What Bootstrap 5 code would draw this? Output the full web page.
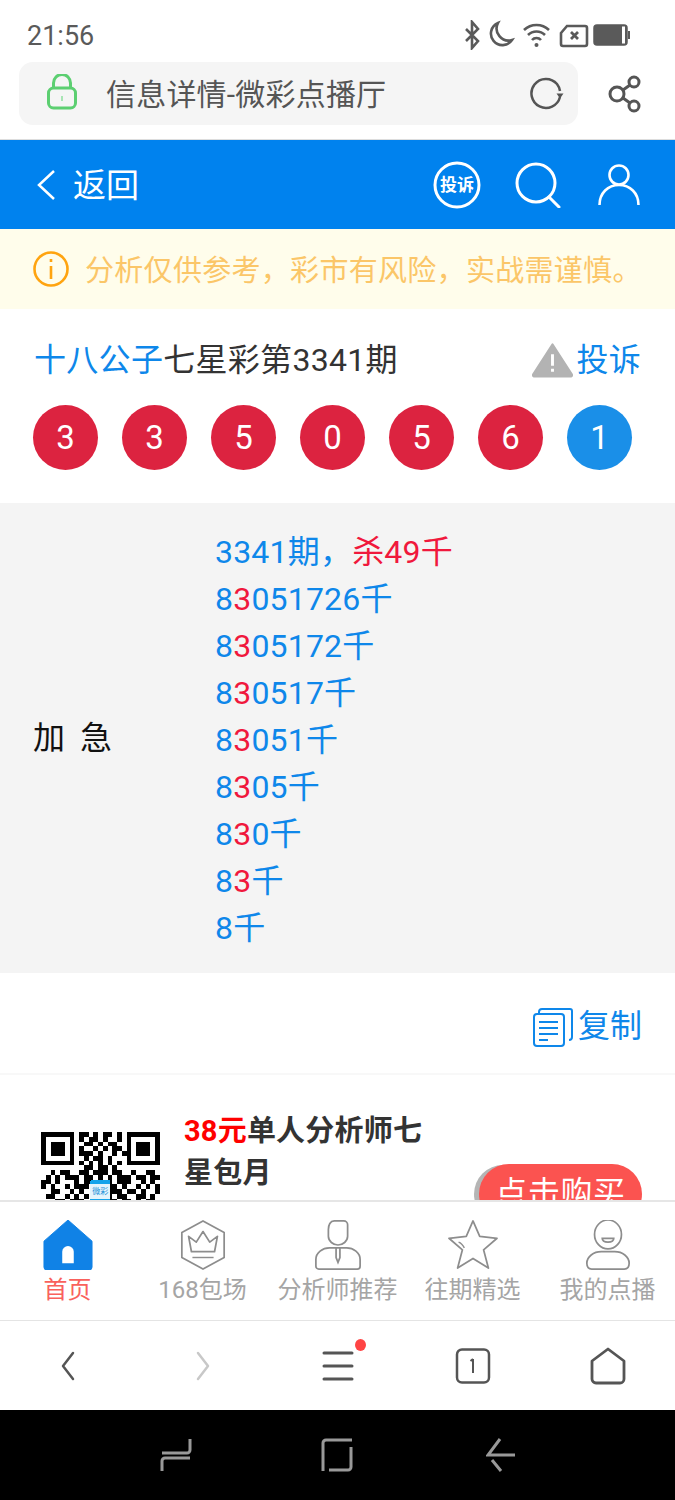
<!DOCTYPE html>
<html lang="zh-CN">
<head>
<meta charset="UTF-8">
<meta name="viewport" content="width=device-width, initial-scale=1.0">
<title>信息详情-微彩点播厅</title>
<link href="https://cdn.jsdelivr.net/npm/bootstrap@5.3.2/dist/css/bootstrap.min.css" rel="stylesheet">
<style>
body { width: 675px; height: 1500px; overflow: hidden; background: #fff; font-family: Roboto, "Noto Sans CJK SC", sans-serif; }
.phone { height: 1500px; }
.status-row { height: 62px; padding: 16px 45px 0 27px; color: #5a5a5a; font-size: 27px; line-height: 40px; }
.status-icons { margin-top: 4px; }
.url-row { height: 78px; padding: 0 33px 14px 19px; border-bottom: 1px solid #ddd; }
.url-box { width: 559px; height: 63px; background: #f5f5f5; border-radius: 14px; padding: 0 14px 0 28px; }
.url-text { font-size: 30px; letter-spacing: .2px; color: #555; margin-left: 29px; margin-top: 1px; }
.top-bar { height: 89px; background: #0082ee; color: #fff; padding: 0 35px 0 36px; }
.back-text { font-size: 33px; margin-left: 17px; margin-top: 3px; }
.notice { height: 80px; background: #fffdeb; padding-left: 33px; color: #fbc668; font-size: 29px; }
.notice span { margin-left: 16px; margin-top: 6px; letter-spacing: .3px; white-space: nowrap; }
.title-row { height: 96px; padding: 6px 34px 0 35px; font-size: 32px; color: #333; letter-spacing: .3px; }
.title-name { margin-left: -1px; }
.blue-text { color: #0e87ea; }
.balls { height: 98px; padding-left: 33px; gap: 24px; }
.ball { width: 65px; height: 65px; color: #fff; font-size: 33px; background: #dc2340; }
.ball-blue { background: #1a8fe8; }
.detail { height: 470px; background: #f4f4f4; padding: 0 0 0 33px; font-size: 32px; }
.detail-label { width: 183px; color: #111; }
.detail-label i { display: inline-block; width: 15px; }
.detail-lines { line-height: 47px; color: #0e87ea; letter-spacing: .2px; margin: 5px 0 0 -1px; }
.red-text { color: #f0183c; }
.copy-row { height: 102px; border-bottom: 2px solid #f8f8f8; padding: 8px 33px 0 0; font-size: 32px; color: #0e87ea; }
.copy-row span { margin-left: 5px; margin-top: -2px; }
.ad-row { height: 125px; overflow: hidden; padding-left: 41px; position: relative; }
.qr { margin-top: 57px; width: 119px; flex: none; }
.ad-text { width: 250px; margin: 35px 0 0 24px; font-size: 29px; line-height: 42px; font-weight: 700; color: #333; letter-spacing: .2px; }
.ad-price { color: #f00; }
.buy-btn { position: absolute; left: 479px; top: 89px; width: 163px; height: 60px; border-radius: 30px; background: #fb5350; color: #fff; font-size: 32px; letter-spacing: .6px; padding-top: 5px; box-shadow: -6px 0 0 -1px #b5b5b5; }
.tabs { height: 120px; border-top: 2px solid #e6e6e6; }
.tab-item { width: 135px; color: #a5a5a5; font-size: 24px; padding-top: 18px; white-space: nowrap; }
.tab-item svg { height: 50px; margin-bottom: 2px; }
.tab-on { color: #f9615c; }
.tool-row { height: 90px; border-top: 1px solid #e4e4e4; }
.tool-item { width: 135px; position: relative; }
.red-dot { position: absolute; left: 85px; top: -12px; width: 11px; height: 12px; background: #f44; }
.sys-row { height: 90px; background: #000; }
.sys-mid { margin: 0 133px 0 129px; }
</style>
</head>
<body>
<div class="phone d-flex flex-column">

    <!-- status bar -->
    <div class="status-row d-flex justify-content-between flex-shrink-0">
        <div>21:56</div>
        <svg class="status-icons" width="166" height="30" viewBox="0 0 166 30" fill="none" stroke="#5a5a5a" stroke-width="2.600">
            <path d="M2 9l12 12-6 7V2l6 7L2 21"/>
            <path d="M34 3a11.500 11.500 0 1 0 14 17 12 12 0 0 1-14-17z"/>
            <path d="M60 10a18 18 0 0 1 25 0M64 15a12 12 0 0 1 17 0M68 20a6 6 0 0 1 9 0"/>
            <circle cx="72.500" cy="25" r="2" fill="#5a5a5a" stroke="none"/>
            <path d="M97 13l6-7h18a2 2 0 0 1 2 2v16a2 2 0 0 1-2 2H99a2 2 0 0 1-2-2z"/>
            <path d="M107 12l7 7M114 12l-7 7" stroke-width="2.800"/>
            <rect x="130" y="5" width="33" height="20" rx="3" fill="#5a5a5a" stroke-width="1.500"/>
            <rect x="158" y="6.500" width="3" height="17" fill="#fff" stroke="none"/>
            <rect x="164" y="11" width="2" height="8" fill="#5a5a5a" stroke="none"/>
        </svg>
    </div>

    <!-- browser address bar -->
    <div class="url-row d-flex justify-content-between flex-shrink-0">
        <div class="url-box d-flex align-items-center">
            <svg width="30" height="36" viewBox="0 0 30 36" fill="none" stroke="#5ccf71" stroke-width="3" class="mb-1">
                <rect x="1.500" y="14" width="27" height="20" rx="5"/>
                <path d="M6.500 14V9a8.500 8.500 0 0 1 17 0v5"/>
                <path d="M15 22v5" stroke-width="2" stroke="#a9e5b5"/>
            </svg>
            <div class="url-text flex-grow-1">信息详情-微彩点播厅</div>
            <svg width="34" height="34" viewBox="0 0 34 34" fill="none" stroke="#555" stroke-width="2.500">
                <path d="M30 20A14.500 14.500 0 1 1 27 7a15 15 0 0 1 3 7"/>
                <path d="M26.500 16.500h7l-3.500 5z" fill="#555" stroke="none"/>
            </svg>
        </div>
        <svg class="align-self-center" width="34" height="38" viewBox="0 0 34 38" fill="none" stroke="#555" stroke-width="3">
            <circle cx="9" cy="19" r="7"/>
            <circle cx="26" cy="7" r="5"/>
            <circle cx="26" cy="31" r="5"/>
            <path d="M15 15l7-5M15 23l7 5"/>
        </svg>
    </div>

    <!-- blue header -->
    <div class="top-bar d-flex align-items-center flex-shrink-0">
        <svg width="20" height="32" viewBox="0 0 20 32" fill="none" stroke="#fff" stroke-width="2.500"><path d="M18 2L3 16l15 14"/></svg>
        <div class="back-text flex-grow-1">返回</div>
        <svg width="48" height="48" viewBox="0 0 48 48" style="margin-right:34px">
            <circle cx="24" cy="24" r="22" fill="none" stroke="#fff" stroke-width="3"/>
            <text x="24" y="30" text-anchor="middle" fill="#fff" font-size="17" font-weight="700" font-family="'Noto Sans CJK SC', sans-serif">投诉</text>
        </svg>
        <svg width="46" height="46" viewBox="0 0 46 46" fill="none" stroke="#fff" stroke-width="3" style="margin-right:37px">
            <circle cx="21" cy="21" r="19"/>
            <path d="M34 35l10 10" stroke-linecap="round"/>
        </svg>
        <svg width="42" height="42" viewBox="0 0 42 42" fill="none" stroke="#fff" stroke-width="2.600">
            <circle cx="21" cy="11" r="9.500"/>
            <path d="M1.500 41C1.500 29 10 21 21 21s19.500 8 19.500 20"/>
        </svg>
    </div>

    <!-- notice -->
    <div class="notice d-flex align-items-center flex-shrink-0">
        <svg width="36" height="36" viewBox="0 0 36 36" fill="none" stroke="#ffa410" stroke-width="2.600" class="flex-shrink-0">
            <circle cx="18" cy="18" r="16.500"/>
            <path d="M18 15v13M18 8v3"/>
        </svg>
        <span>分析仅供参考，彩市有风险，实战需谨慎。</span>
    </div>

    <!-- title -->
    <div class="title-row d-flex justify-content-between align-items-center flex-shrink-0">
        <div class="title-name"><span class="blue-text">十八公子</span>七星彩第3341期</div>
        <div class="d-flex align-items-center blue-text">
            <svg width="41" height="36" viewBox="0 0 42 36" style="margin-right:3px">
                <path d="M21 2L41 33a1.500 1.500 0 0 1-1 2H2a1.500 1.500 0 0 1-1-2z" fill="#b3b3b3" stroke="#b3b3b3" stroke-linejoin="round" stroke-width="2"/>
                <path d="M21 12v12M21 27v3" stroke="#fff" stroke-width="3"/>
            </svg>
            投诉
        </div>
    </div>

    <!-- numbers -->
    <div class="balls d-flex flex-shrink-0">
        <div class="ball rounded-circle d-flex align-items-center justify-content-center">3</div>
        <div class="ball rounded-circle d-flex align-items-center justify-content-center">3</div>
        <div class="ball rounded-circle d-flex align-items-center justify-content-center">5</div>
        <div class="ball rounded-circle d-flex align-items-center justify-content-center">0</div>
        <div class="ball rounded-circle d-flex align-items-center justify-content-center">5</div>
        <div class="ball rounded-circle d-flex align-items-center justify-content-center">6</div>
        <div class="ball ball-blue rounded-circle d-flex align-items-center justify-content-center">1</div>
    </div>

    <!-- detail -->
    <div class="detail d-flex align-items-center flex-shrink-0">
        <div class="detail-label">加<i></i>急</div>
        <div class="detail-lines">
            <div>3341期，<span class="red-text">杀49千</span></div>
            <div>8<span class="red-text">3</span>051726千</div>
            <div>8<span class="red-text">3</span>05172千</div>
            <div>8<span class="red-text">3</span>0517千</div>
            <div>8<span class="red-text">3</span>051千</div>
            <div>8<span class="red-text">3</span>05千</div>
            <div>8<span class="red-text">3</span>0千</div>
            <div>8<span class="red-text">3</span>千</div>
            <div>8千</div>
        </div>
    </div>

    <!-- copy -->
    <div class="copy-row d-flex justify-content-end align-items-center flex-shrink-0">
        <svg width="40" height="40" viewBox="0 0 40 40" fill="none" stroke="#0e87ea" stroke-width="2">
            <path d="M6 7V5a3 3 0 0 1 3-3h28a2 2 0 0 1 2 2v26a3 3 0 0 1-3 3"/>
            <rect x="1" y="7" width="30" height="32" rx="3"/>
            <path d="M6 15h19M6 21h19M6 27h19M6 33h9" stroke-width="2.200"/>
        </svg>
        <span>复制</span>
    </div>

    <!-- package ad, cut off by the tab bar -->
    <div class="ad-row d-flex flex-shrink-0">
        <div class="qr">
            <svg id="qrCode" width="119" height="119" viewBox="0 0 25 25" shape-rendering="crispEdges"></svg>
        </div>
        <div class="ad-text"><span class="ad-price">38元</span>单人分析师七星包月</div>
        <div class="buy-btn text-center">点击购买</div>
    </div>

    <!-- tab bar -->
    <div class="tabs d-flex flex-shrink-0 bg-white position-relative">
        <div class="tab-item tab-on d-flex flex-column align-items-center">
            <svg width="52" height="52" viewBox="0 0 52 52">
                <path d="M26 0L51 22v27a3 3 0 0 1-3 3H4a3 3 0 0 1-3-3V22z" fill="#1082e6" stroke="#1082e6" stroke-linejoin="round"/>
                <path d="M20 45V33a6 6 0 0 1 12 0v12z" fill="#fff"/>
            </svg>
            首页
        </div>
        <div class="tab-item d-flex flex-column align-items-center">
            <svg width="48" height="52" viewBox="0 0 48 52" fill="none" stroke="#8d8d8d" stroke-width="1.800">
                <path d="M24 1L46 13v26L24 51 2 39V13z" stroke-linejoin="round"/>
                <path d="M12 33l-3-16 8 6 7-11 7 11 8-6-3 16z" stroke-linejoin="round"/>
                <path d="M13 39h22" stroke-width="1.500"/>
            </svg>
            168包场
        </div>
        <div class="tab-item d-flex flex-column align-items-center">
            <svg width="48" height="52" viewBox="0 0 48 52" fill="none" stroke="#8d8d8d" stroke-width="1.800">
                <path d="M20 1h10a4 4 0 0 1 4 4v12c0 5-5 9-10 9s-10-4-10-9V10c0-5 2-9 6-9z"/>
                <path d="M15 29h18c7 0 14 5 14 12v7a3 3 0 0 1-3 3H4a3 3 0 0 1-3-3v-7c0-7 7-12 14-12z"/>
                <path d="M22 29v10l2 5 2-5V29"/>
            </svg>
            分析师推荐
        </div>
        <div class="tab-item d-flex flex-column align-items-center">
            <svg width="52" height="52" viewBox="0 0 52 52" fill="none" stroke="#8d8d8d" stroke-width="1.800">
                <path d="M26 1l7 16 18 2-14 12 5 19-16-10-16 10 5-19L1 19l18-2z" stroke-linejoin="round"/>
                <path d="M11 23c3 1 5 4 6 6" stroke-width="1.500"/>
            </svg>
            往期精选
        </div>
        <div class="tab-item d-flex flex-column align-items-center">
            <svg width="46" height="52" viewBox="0 0 46 52" fill="none" stroke="#8d8d8d" stroke-width="1.800">
                <ellipse cx="23" cy="15" rx="14" ry="15"/>
                <path d="M17 19h12c0 3-3 4-6 4s-6-1-6-4z"/>
                <path d="M16 33h14c8 0 15 5 15 12 0 4-2 6-5 6H6c-3 0-5-2-5-6 0-7 7-12 15-12z"/>
            </svg>
            我的点播
        </div>
    </div>

    <!-- browser toolbar -->
    <div class="tool-row d-flex align-items-center flex-shrink-0">
        <div class="tool-item text-center">
            <svg width="14" height="30" viewBox="0 0 14 30" fill="none" stroke="#555" stroke-width="2.500" stroke-linecap="round" stroke-linejoin="round"><path d="M12 2L2 15l10 13"/></svg>
        </div>
        <div class="tool-item text-center">
            <svg width="14" height="30" viewBox="0 0 14 30" fill="none" stroke="#c8c8c8" stroke-width="2.500" stroke-linecap="round" stroke-linejoin="round"><path d="M2 2l10 13L2 28"/></svg>
        </div>
        <div class="tool-item text-center">
            <svg width="32" height="30" viewBox="0 0 32 30" fill="none" stroke="#555" stroke-width="3" stroke-linecap="round"><path d="M2 2h28M2 15h28M2 28h28"/></svg>
            <div class="red-dot rounded-circle"></div>
        </div>
        <div class="tool-item text-center">
            <svg width="36" height="36" viewBox="0 0 36 36" fill="none" stroke="#555" stroke-width="2.500"><rect x="2" y="1.500" width="32" height="33" rx="5"/><path d="M18 11v14M15.500 13l2.500-2" stroke-width="2"/></svg>
        </div>
        <div class="tool-item text-center">
            <svg width="36" height="38" viewBox="0 0 36 38" fill="none" stroke="#555" stroke-width="2.800" stroke-linejoin="round"><path d="M18 2L34 14v18a4 4 0 0 1-4 4H6a4 4 0 0 1-4-4V14z"/></svg>
        </div>
    </div>

    <!-- android nav keys -->
    <div class="sys-row d-flex align-items-center justify-content-center flex-shrink-0">
        <svg width="32" height="34" viewBox="0 0 32 34" fill="none" stroke="#999" stroke-width="3">
            <path d="M30 1v11a3 3 0 0 1-3 3H2"/>
            <path d="M2 33V23a3 3 0 0 1 3-3h25"/>
        </svg>
        <svg class="sys-mid" width="32" height="34" viewBox="0 0 32 34" fill="none" stroke="#999" stroke-width="3">
            <path d="M2 33V5a3 3 0 0 1 3-3h26"/>
            <path d="M30 9v20a3 3 0 0 1-3 3H8"/>
        </svg>
        <svg width="30" height="34" viewBox="0 0 30 34" fill="none" stroke="#999" stroke-width="3">
            <path d="M29 17H2L14 1M6 22l9 11"/>
        </svg>
    </div>
</div>

<script>
    // qr modules, 1 = black. only the rows above the tab bar are visible
    const qrRows = [
        '1111111011010110101111111',
        '1000001010110100101000001',
        '1011101001101011001011101',
        '1011101010010101101011101',
        '1011101011101001011011101',
        '1000001001011010001000001',
        '1111111010101010101111111',
        '0000000001101101000000000',
        '0010110011011101100100110',
        '0101011101101010111011011',
        '1101000101100110111001010',
        '1010010111000011010010101',
        '0011001010000011101101001',
        '0110010101000010110011010',
        '0001101110000011011010110',
        '0011001001000010011100101'
    ];
    const qrSvg = document.getElementById('qrCode');
    let qrHtml = '';
    qrRows.forEach((row, y) => {
        [...row].forEach((cell, x) => {
            if (cell === '1') qrHtml += `<rect x="${x}" y="${y}" width="1" height="1"/>`;
        });
    });
    // small logo in the middle of the code
    qrHtml += '<rect x="10.300" y="10" width="4.300" height="5.500" rx=".6" fill="#14a3ea"/>';
    qrHtml += '<rect x="10.300" y="11" width="4.300" height="3" fill="#e4f4fc"/>';
    qrHtml += '<text x="12.450" y="13" text-anchor="middle" font-size="1.700" fill="#1a8fd8" font-family="\'Noto Sans CJK SC\', sans-serif">微彩</text>';
    qrSvg.innerHTML = qrHtml;
</script>
<script src="https://cdn.jsdelivr.net/npm/bootstrap@5.3.2/dist/js/bootstrap.bundle.min.js"></script>
</body>
</html>
